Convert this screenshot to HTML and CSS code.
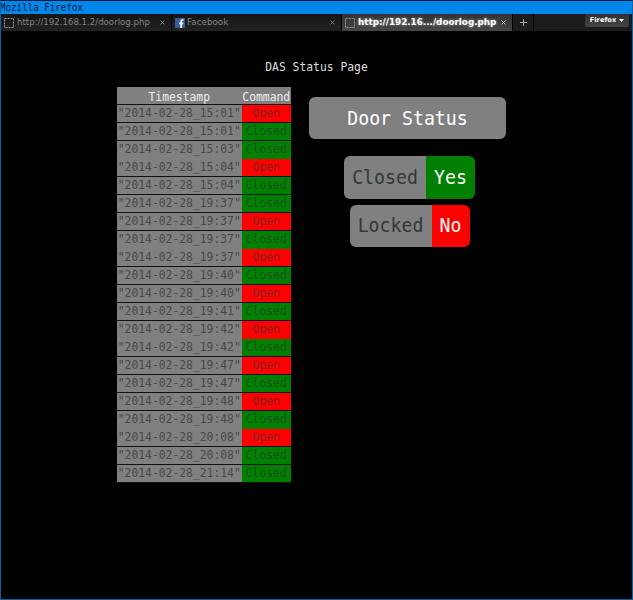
FILE: index.html
```
<!DOCTYPE html>
<html lang="en">
<head>
<meta charset="utf-8">
<title>DAS Status Page</title>
<link rel="stylesheet" href="styles.css">
</head>
<body>
<div class="window">
<header class="titlebar"><span class="tall">Mozilla Firefox</span></header>
<nav class="tabs">
<div class="tab first"><svg class="fav" viewBox="0 0 10 10"><rect x=".5" y=".5" width="9" height="9"/></svg><span class="label">http://192.168.1.2/doorlog.php</span><svg class="close" viewBox="0 0 5 5"><path d="M.5.5l4 4M4.5.5l-4 4"/></svg></div>
<div class="tab second"><svg class="fb" viewBox="0 0 10 10"><rect width="10" height="10"/><path d="M8.5 2H7.4Q6.2 2 6.2 3.2V10M4.2 5.3H8.3"/></svg><span class="label">Facebook</span><svg class="close" viewBox="0 0 5 5"><path d="M.5.5l4 4M4.5.5l-4 4"/></svg></div>
<div class="tab active"><svg class="fav" viewBox="0 0 10 10"><rect x=".5" y=".5" width="9" height="9"/></svg><span class="label">http://192.16.../doorlog.php</span><svg class="close" viewBox="0 0 5 5"><path d="M.5.5l4 4M4.5.5l-4 4"/></svg></div>
<div class="new"><svg viewBox="0 0 7 7"><path d="M3.5 0v7M0 3.5h7"/></svg></div>
<div class="menu"><span>Firefox</span><svg viewBox="0 0 5 3"><path d="M0 0h5L2.5 3z"/></svg></div>
</nav>
<main>
<h1><span class="tall">DAS Status Page</span></h1>
<div class="content">
<table class="log">
<thead><tr><th class="time"><span class="tall">Timestamp</span></th><th><span class="tall">Command</span></th></tr></thead>
<tbody id="log"></tbody>
</table>
<section class="status">
<h2><span class="big">Door Status</span></h2>
<div class="pill"><span class="name"><span class="big">Closed</span></span><span class="value yes"><span class="big">Yes</span></span></div>
<div class="pill locked"><span class="name"><span class="big">Locked</span></span><span class="value no"><span class="big">No</span></span></div>
</section>
</div>
</main>
</div>
<script src="log.js"></script>
</body>
</html>
```
FILE: styles.css
```
* { box-sizing: border-box; }
body { margin: 0; background: #000; color: #ddd; font-family: "DejaVu Sans Mono", monospace; }
.window { height: 600px; border: 1px solid #0864a8; border-top-color: #001a33; overflow: hidden; }
.tall { display: inline-block; transform: scaleY(1.14); }
.big { display: inline-block; transform: scaleY(1.06); }
.titlebar { height: 13px; margin: 0 -1px; background: #0087eb; color: #05192b; font-size: 9.2px; line-height: 13px; white-space: pre; }
.tabs { display: flex; height: 17px; background: #1b1b1b; font: 8.8px/17px "DejaVu Sans", sans-serif; color: #858585; }
.tab { display: flex; align-items: center; padding: 0 6px 0 3px; border-right: 1px solid #000; background: linear-gradient(#151515, #222); white-space: nowrap; }
.first { width: 171px; font-size: 8.6px; }
.second { width: 170px; }
.active { width: 171px; background: linear-gradient(#333, #454545); color: #fff; font-weight: bold; text-shadow: 0 0 3px #aaa; }
.fav, .fb { width: 10px; height: 10px; margin-right: 3px; flex: none; }
.fb { margin-right: 2px; }
.fav rect { fill: none; stroke: #999; stroke-dasharray: 2 1; }
.fb rect { fill: #3b5998; }
.fb path { fill: none; stroke: #fff; stroke-width: 1.7; }
.label { flex: 1; }
.close { width: 5px; height: 5px; flex: none; }
.close path { stroke: #777; fill: none; }
.active .close path { stroke: #bbb; }
.new { display: flex; width: 21px; align-items: center; justify-content: center; border-right: 1px solid #000; }
.new svg { width: 7px; height: 7px; }
.new path { stroke: #aaa; }
.menu { display: flex; align-items: center; justify-content: center; gap: 3px; width: 44px; height: 13px; margin-left: auto; margin-right: 3px; background: linear-gradient(#303030, #444); color: #fff; font-size: 6.7px; font-weight: bold; border-radius: 0 0 2px 2px; }
.menu svg { width: 5px; height: 3px; }
.menu path { fill: #fff; }
h1 { margin: 28px 0 0; height: 17px; text-align: center; font-size: 11.35px; line-height: 17px; font-weight: normal; }
.content { display: flex; padding: 11px 0 0 116px; }
.log { width: 174px; border-collapse: collapse; table-layout: fixed; font-size: 11.35px; }
.log th, .log td { height: 18px; padding: 0; line-height: 17px; text-align: center; font-weight: normal; background: #808080; color: #444a4a; border-bottom: 1px solid #111; white-space: nowrap; }
.log .tall { display: block; }
.log th { height: 17px; padding-top: 1px; line-height: 16px; color: #eee; }
.log .time { width: 124.5px; }
.log .open { background: #f00; color: #812020; }
.log .closed { background: #008000; color: #205020; }
.log .joined td { border-bottom-color: #808080; }
.log .joined .closed { border-bottom-color: #008000; }
.log .joined .open { border-bottom-color: #f00; }
.status { width: 197px; margin: 10px 0 0 18px; display: flex; flex-direction: column; align-items: center; font-size: 18.2px; }
h2 { width: 100%; height: 42px; margin: 0 0 17px; border-radius: 6px; background: #808080; color: #fff; font-size: 18.2px; line-height: 43px; font-weight: normal; text-align: center; }
.pill { display: flex; width: 131px; height: 43px; margin-left: 4px; border-radius: 6px; overflow: hidden; line-height: 44px; text-align: center; }
.name { width: 82px; background: #808080; color: #303838; }
.value { flex: 1; color: #fff; }
.yes { background: #008000; }
.no { background: #f00; }
.locked { width: 120px; height: 42px; margin-top: 6px; line-height: 42px; }
```
FILE: log.js
```
const entries = ["15:01 Open", "15:01 Closed", "15:03 Closed", "15:04 Open", "15:04 Closed", "19:37 Closed", "19:37 Open", "19:37 Closed", "19:37 Open", "19:40 Closed", "19:40 Open", "19:41 Closed", "19:42 Open", "19:42 Closed", "19:47 Open", "19:47 Closed", "19:48 Open", "19:48 Closed", "20:08 Open", "20:08 Closed", "21:14 Closed"];
const joined = [2, 7, 12, 17];
document.getElementById("log").innerHTML = entries.map((entry, i) => {
  const [time, command] = entry.split(" ");
  return `<tr class="${joined.includes(i) ? "joined" : ""}"><td><span class="tall">"2014-02-28_${time}"</span></td><td class="${command.toLowerCase()}"><span class="tall">${command}</span></td></tr>`;
}).join("");
```
